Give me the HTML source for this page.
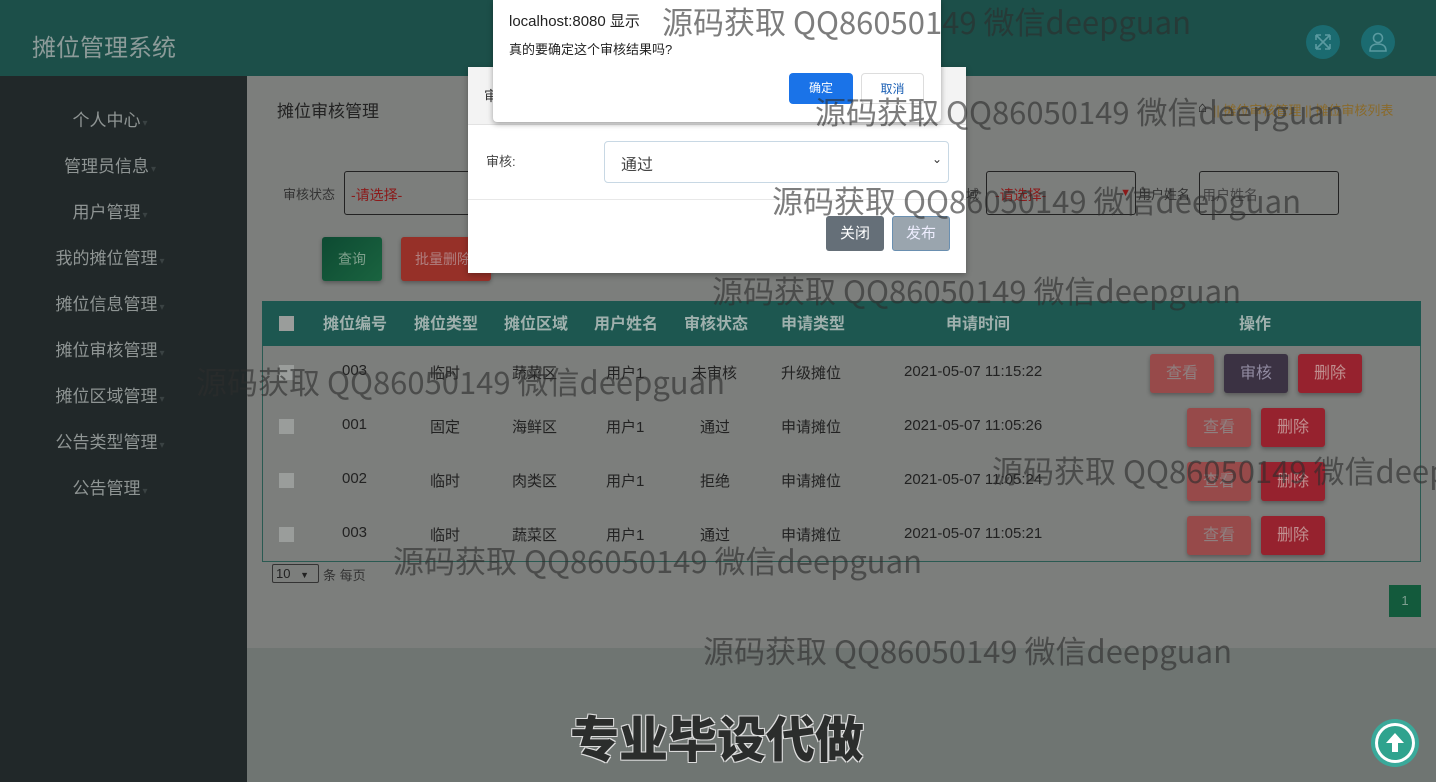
<!DOCTYPE html>
<html><head><meta charset="utf-8"><style>
*{margin:0;padding:0;box-sizing:border-box}
body{width:1436px;height:782px;overflow:hidden;position:relative;background:#7c7e7c;font-family:"Liberation Sans","Noto Sans CJK SC",sans-serif;color:#222}
.a{position:absolute;white-space:nowrap}
.hdr{left:0;top:0;width:1436px;height:76px;background:#1c4f49}
.side{left:0;top:76px;width:247px;height:706px;background:#212829}
.side div{position:absolute;width:220px;text-align:center;font-size:17px;color:#8f9594}
.side div:after{content:"▾";font-size:10px;color:#3a4243;margin-left:2px}
.lower{left:247px;top:648px;width:1189px;height:134px;background:#6f7572}
.th{font-size:16px;font-weight:bold;color:#9fb0ad;top:310px}
.td{font-size:15px;color:#222}
.btn{position:absolute;height:39px;border-radius:3px;color:#8f8080;font-size:16px;text-align:center;line-height:39px;box-shadow:0 2px 4px rgba(0,0,0,.3)}
.ck{background:#9a9d9b;width:15px;height:15px}
.wm{position:absolute;white-space:nowrap;font-size:31px;color:rgba(45,45,45,.62);font-family:"Noto Sans CJK SC",sans-serif;line-height:1}
</style></head><body>
<div class="a hdr"></div>
<div class="a" style="left:32px;top:28px;font-size:24px;color:#8c9b99">摊位管理系统</div>
<div class="a" style="left:1306px;top:25px;width:34px;height:34px;border-radius:50%;background:#1b6b70"></div>
<svg class="a" style="left:1314px;top:33px" width="18" height="18" viewBox="0 0 18 18" fill="none" stroke="#5a9aa0" stroke-width="1.6"><path d="M2 2l14 14M16 2L2 16M2 2h5M2 2v5M16 2h-5M16 2v5M2 16h5M2 16v-5M16 16h-5M16 16v-5"/></svg>
<div class="a" style="left:1361px;top:25px;width:34px;height:34px;border-radius:50%;background:#1b6b70"></div>
<svg class="a" style="left:1369px;top:32px" width="18" height="20" viewBox="0 0 18 20" fill="none" stroke="#5a9aa0" stroke-width="1.6"><circle cx="9" cy="6" r="4.5"/><path d="M1 19c0-5 3-7 8-7s8 2 8 7z"/></svg>

<div class="a side">
<div style="top:30px">个人中心</div><div style="top:76px">管理员信息</div><div style="top:122px">用户管理</div><div style="top:168px">我的摊位管理</div><div style="top:214px">摊位信息管理</div><div style="top:260px">摊位审核管理</div><div style="top:306px">摊位区域管理</div><div style="top:352px">公告类型管理</div><div style="top:398px">公告管理</div>
</div>
<div class="a lower"></div>

<div class="a" style="left:277px;top:97px;font-size:17px">摊位审核管理</div>
<div class="a" style="left:1198px;top:99px;font-size:15px;color:#222">⌂</div>
<div class="a" style="left:1213px;top:100px;font-size:13px;color:#8a6a2a">|| 摊位审核管理 || 摊位审核列表</div>

<div class="a" style="left:283px;top:184px;font-size:13px;color:#333">审核状态</div>
<div class="a" style="left:344px;top:171px;width:130px;height:44px;border:1px solid #222;border-radius:3px;font-size:14px;color:#8b1a1a;padding:13px 0 0 6px">-请选择-</div>
<div class="a" style="left:966px;top:184px;font-size:13px;color:#333">域</div>
<div class="a" style="left:986px;top:171px;width:150px;height:44px;border:1px solid #222;border-radius:3px;font-size:14px;color:#8b1a1a;padding:13px 0 0 8px">-请选择-<span style="position:absolute;right:4px;color:#8b1a1a;font-size:11px;top:15px">▼</span></div>
<div class="a" style="left:1138px;top:184px;font-size:13px;color:#333">用户姓名</div>
<div class="a" style="left:1199px;top:171px;width:140px;height:44px;border:1px solid #222;border-radius:3px;font-size:14px;color:#444;padding:13px 0 0 2px">用户姓名</div>

<div class="btn" style="left:322px;top:237px;width:60px;height:44px;line-height:44px;background:linear-gradient(135deg,#0d4a32,#1a6440);color:#7fa08c;font-size:14px">查询</div>
<div class="btn" style="left:401px;top:237px;width:90px;height:44px;line-height:44px;background:#963028;color:#b08080;font-size:14px;text-align:left;padding-left:14px">批量删除</div>

<div class="a" style="left:262px;top:301px;width:1159px;height:261px;border:1px solid #2a5a52"></div>
<div class="a" style="left:262px;top:301px;width:1159px;height:45px;background:#1d5750"></div>
<div class="a ck" style="left:279px;top:316px"></div>
<div class="a th" style="left:323px">摊位编号</div><div class="a th" style="left:414px">摊位类型</div><div class="a th" style="left:504px">摊位区域</div><div class="a th" style="left:594px">用户姓名</div><div class="a th" style="left:684px">审核状态</div><div class="a th" style="left:781px">申请类型</div><div class="a th" style="left:946px">申请时间</div><div class="a th" style="left:1239px">操作</div>

<div class="a ck" style="left:279px;top:365px"></div><div class="a td" style="left:342px;top:362px">003</div><div class="a td" style="left:430px;top:362px">临时</div><div class="a td" style="left:512px;top:362px">蔬菜区</div><div class="a td" style="left:606px;top:362px">用户1</div><div class="a td" style="left:692px;top:362px">未审核</div><div class="a td" style="left:781px;top:362px">升级摊位</div><div class="a td" style="left:904px;top:363px">2021-05-07 11:15:22</div>
<div class="btn" style="left:1150px;top:354px;width:64px;background:#974a4a">查看</div><div class="btn" style="left:1224px;top:354px;width:64px;background:#3b3243;color:#908aa0">审核</div><div class="btn" style="left:1298px;top:354px;width:64px;background:#96222e;color:#c09090">删除</div>

<div class="a ck" style="left:279px;top:419px"></div><div class="a td" style="left:342px;top:416px">001</div><div class="a td" style="left:430px;top:416px">固定</div><div class="a td" style="left:512px;top:416px">海鲜区</div><div class="a td" style="left:606px;top:416px">用户1</div><div class="a td" style="left:700px;top:416px">通过</div><div class="a td" style="left:781px;top:416px">申请摊位</div><div class="a td" style="left:904px;top:417px">2021-05-07 11:05:26</div>
<div class="btn" style="left:1187px;top:408px;width:64px;background:#974a4a">查看</div><div class="btn" style="left:1261px;top:408px;width:64px;background:#96222e;color:#c09090">删除</div>

<div class="a ck" style="left:279px;top:473px"></div><div class="a td" style="left:342px;top:470px">002</div><div class="a td" style="left:430px;top:470px">临时</div><div class="a td" style="left:512px;top:470px">肉类区</div><div class="a td" style="left:606px;top:470px">用户1</div><div class="a td" style="left:700px;top:470px">拒绝</div><div class="a td" style="left:781px;top:470px">申请摊位</div><div class="a td" style="left:904px;top:471px">2021-05-07 11:05:24</div>
<div class="btn" style="left:1187px;top:462px;width:64px;background:#974a4a">查看</div><div class="btn" style="left:1261px;top:462px;width:64px;background:#96222e;color:#c09090">删除</div>

<div class="a ck" style="left:279px;top:527px"></div><div class="a td" style="left:342px;top:524px">003</div><div class="a td" style="left:430px;top:524px">临时</div><div class="a td" style="left:512px;top:524px">蔬菜区</div><div class="a td" style="left:606px;top:524px">用户1</div><div class="a td" style="left:700px;top:524px">通过</div><div class="a td" style="left:781px;top:524px">申请摊位</div><div class="a td" style="left:904px;top:525px">2021-05-07 11:05:21</div>
<div class="btn" style="left:1187px;top:516px;width:64px;background:#974a4a">查看</div><div class="btn" style="left:1261px;top:516px;width:64px;background:#96222e;color:#c09090">删除</div>

<div class="a" style="left:272px;top:564px;width:47px;height:19px;border:1px solid #333;border-radius:2px;font-size:13px;padding:1px 3px">10 <span style="font-size:9px;margin-left:6px">▼</span></div>
<div class="a" style="left:323px;top:565px;font-size:13px;color:#333">条 每页</div>
<div class="a" style="left:1389px;top:585px;width:32px;height:32px;background:#135a3c;color:#7fa090;font-size:13px;text-align:center;line-height:32px">1</div>

<!-- modal -->
<div class="a" style="left:468px;top:67px;width:498px;height:206px;background:#fff;box-shadow:0 2px 6px rgba(0,0,0,.3)"></div>
<div class="a" style="left:468px;top:67px;width:498px;height:58px;background:#f3f3f3;border-bottom:1px solid #e2e2e2"></div>
<div class="a" style="left:484px;top:86px;font-size:14px;color:#333">审</div>
<div class="a" style="left:486px;top:151px;font-size:13px;color:#444">审核:</div>
<div class="a" style="left:604px;top:141px;width:345px;height:42px;border:1px solid #c8d8e4;border-radius:4px;font-size:16px;color:#444;padding:9px 0 0 16px">通过<span style="position:absolute;right:6px;top:10px;font-size:12px;color:#333">⌄</span></div>
<div class="a" style="left:468px;top:199px;width:498px;height:1px;background:#e8e8e8"></div>
<div class="a" style="left:826px;top:216px;width:58px;height:35px;background:#656f78;border-radius:3px;color:#fff;font-size:15px;text-align:center;line-height:35px">关闭</div>
<div class="a" style="left:892px;top:216px;width:58px;height:35px;background:#9aa5ae;border:1px solid #6a8fb0;border-radius:3px;color:#eef;font-size:15px;text-align:center;line-height:33px">发布</div>

<!-- alert -->
<div class="a" style="left:493px;top:0;width:448px;height:122px;background:#fff;box-shadow:0 2px 6px rgba(0,0,0,.35);border-radius:0 0 4px 4px"></div>
<div class="a" style="left:509px;top:10px;font-size:15px;color:#222">localhost:8080 显示</div>
<div class="a" style="left:509px;top:39px;font-size:13px;color:#222">真的要确定这个审核结果吗?</div>
<div class="a" style="left:789px;top:73px;width:64px;height:31px;background:#1a73e8;border-radius:4px;color:#fff;font-size:12px;text-align:center;line-height:31px">确定</div>
<div class="a" style="left:861px;top:73px;width:63px;height:31px;border:1px solid #ddd;border-radius:4px;color:#1a5fb4;font-size:12px;text-align:center;line-height:31px">取消</div>

<!-- watermarks -->
<div class="wm" style="left:662px;top:5px">源码获取 QQ86050149 微信deepguan</div>
<div class="wm" style="left:815px;top:95px">源码获取 QQ86050149 微信deepguan</div>
<div class="wm" style="left:772px;top:184px">源码获取 QQ86050149 微信deepguan</div>
<div class="wm" style="left:712px;top:274px">源码获取 QQ86050149 微信deepguan</div>
<div class="wm" style="left:196px;top:365px">源码获取 QQ86050149 微信deepguan</div>
<div class="wm" style="left:992px;top:454px">源码获取 QQ86050149 微信deepguan</div>
<div class="wm" style="left:393px;top:544px">源码获取 QQ86050149 微信deepguan</div>
<div class="wm" style="left:703px;top:634px">源码获取 QQ86050149 微信deepguan</div>

<div class="a" style="left:570px;top:710px;font-size:49px;font-weight:900;color:#2b2d2c;font-family:'Noto Sans CJK SC',sans-serif;line-height:1.1;text-shadow:-1px -1px 0 #ddd,1px -1px 0 #ddd,-1px 1px 0 #ddd,1px 1px 0 #ddd">专业毕设代做</div>

<div class="a" style="left:1371px;top:719px;width:48px;height:48px;border-radius:50%;background:#3aa99a"></div>
<div class="a" style="left:1375px;top:723px;width:40px;height:40px;border-radius:50%;background:#fff"></div>
<div class="a" style="left:1378px;top:726px;width:34px;height:34px;border-radius:50%;background:#2fa38e"></div>
<svg class="a" style="left:1384px;top:731px" width="22" height="24" viewBox="0 0 22 24"><path d="M11 2L2 12h6v9h6v-9h6z" fill="#fff"/></svg>
</body></html>
